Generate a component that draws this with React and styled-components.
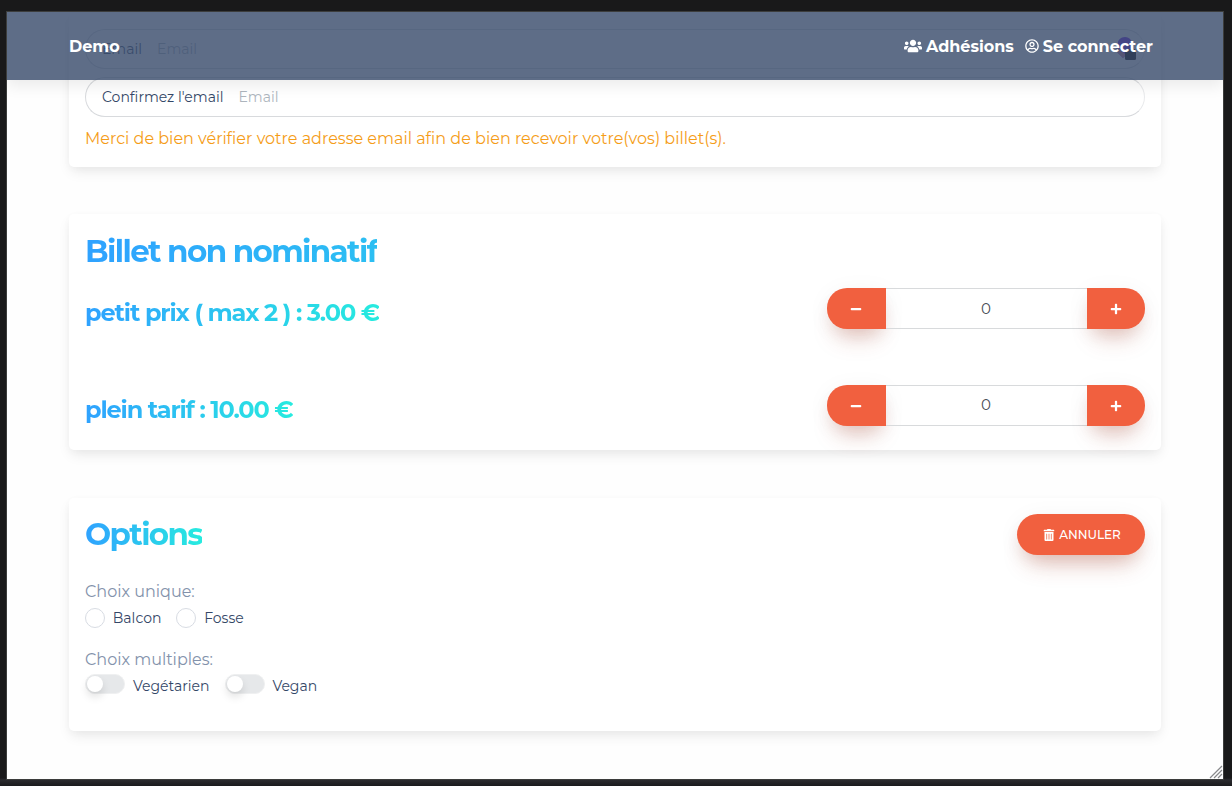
import React, { useState } from "react";
import styled, { createGlobalStyle, css } from "styled-components";
import { FaUsers, FaRegUserCircle, FaMinus, FaPlus, FaTrashAlt } from "react-icons/fa";

const Global = createGlobalStyle`
  * { box-sizing: border-box; }
  html, body { margin: 0; background: #19191a; }
  body { font-family: Montserrat, Inter, "Noto Sans", sans-serif; font-weight: 400; color: #344767; overflow: hidden; }
  button, input { font: inherit; }
`;

const Frame = styled.div`
  height: 786px;
  padding: 11px 8px 6px 6px;
  background: linear-gradient(#19191a 0 778px, #2b2b2f 780px, #1a1a1d 786px);
`;
const Viewport = styled.div`
  position: relative;
  height: 769px;
  overflow: hidden;
  background: #fefefe;
  border: 1px solid #3c3d3c;
`;
const Navbar = styled.header`
  position: absolute;
  inset: 0 0 auto;
  z-index: 3;
  height: 68px;
  padding: 0 70px 0 62px;
  display: flex;
  align-items: center;
  justify-content: space-between;
  background: rgba(58, 77, 108, 0.82);
  box-shadow: 0 6px 14px rgba(0, 0, 0, 0.08);
  color: #fff;
  font-size: 16px;
  font-weight: 700;
`;
const Links = styled.nav`
  display: flex;
  gap: 11.5px;
`;
const NavLink = styled.a`
  display: flex;
  align-items: center;
  gap: 3.5px;
  svg { display: block; }
`;
const Label = styled.span`
  display: block;
  white-space: nowrap;
`;

const Content = styled.main`
  padding: 0 62px;
  display: flex;
  flex-direction: column;
`;
const Card = styled.section`
  height: ${(p) => p.$height}px;
  margin-bottom: ${(p) => p.$after || 0}px;
  padding: ${(p) => (p.$cut ? 17 : 16)}px 16px 16px;
  border-radius: ${(p) => (p.$cut ? "0 0 5px 5px" : "5px")};
  background: #fff;
  box-shadow: 0 6px 14px -2px rgba(0, 0, 0, 0.09), 0 2px 8px rgba(0, 0, 0, 0.025);
`;
const Field = styled.label`
  height: 40px;
  margin-bottom: 8px;
  padding: 0 16px;
  display: flex;
  align-items: center;
  border: 1px solid #d8dadd;
  border-right-color: #e9eaec;
  border-radius: 20px;
  font-size: 14px;
  svg { margin-left: auto; margin-right: -12px; }
`;
const Placeholder = styled(Label)`
  margin-left: 15px;
  color: #adb5bd;
`;
const Notice = styled.p`
  margin: 11px 0 0;
  color: #f59d18;
  font-size: 16px;
  line-height: 22px;
`;
const gradient = css`
  width: max-content;
  background: linear-gradient(90deg, #2fa2ff, #27ebdf) 0 0 / ${(p) => p.$span || "100%"} 100%;
  background-clip: text;
  -webkit-background-clip: text;
  color: transparent;
`;
const Title = styled.h2`
  margin: 0;
  font-size: 31px;
  font-weight: 700;
  line-height: ${(p) => p.$line || 42}px;
  white-space: nowrap;
  letter-spacing: -1.63px;
  ${gradient}
`;
const Price = styled.h4`
  margin: 0;
  font-size: 24px;
  font-weight: 700;
  line-height: 34px;
  white-space: nowrap;
  letter-spacing: -1.12px;
  ${gradient}
`;
const PriceRow = styled.div`
  height: 41px;
  margin-top: ${(p) => p.$top}px;
  display: flex;
  justify-content: space-between;
  align-items: center;
`;
const PriceCell = styled.div`
  padding-top: 9px;
`;
const Stepper = styled.div`
  width: 318px;
  height: 41px;
  display: flex;
`;
const StepButton = styled.button`
  width: ${(p) => (p.$left ? 59 : 58)}px;
  border: 0;
  padding: 0 1px 0 0;
  display: flex;
  align-items: center;
  justify-content: center;
  color: #fff;
  background: #f1603f;
  border-radius: ${(p) => (p.$left ? "20px 0 0 20px" : "0 20px 20px 0")};
  box-shadow: 0 16px 26px -10px rgba(165, 45, 20, 0.28), 0 4px 25px rgba(0, 0, 0, 0.05), 0 8px 16px -5px rgba(165, 45, 20, 0.12);
`;
const Count = styled.input`
  flex: 1;
  min-width: 0;
  padding: 0 1px ${(p) => p.$lift || 0}px 0;
  text-align: center;
  font-size: 15px;
  color: #495057;
  background: transparent;
  border: solid #d8dadc;
  border-width: 1px 0;
  border-radius: 0;
`;
const CardHead = styled.div`
  display: flex;
  justify-content: space-between;
  align-items: flex-start;
`;
const Cancel = styled.button`
  width: 128px;
  height: 41px;
  padding: 0 0 0 2px;
  border: 0;
  border-radius: 21px;
  display: flex;
  align-items: center;
  justify-content: center;
  gap: 4px;
  color: #fff;
  background: #f1603f;
  font-size: 12px;
  font-weight: 500;
  box-shadow: 0 16px 26px -10px rgba(165, 45, 20, 0.3), 0 4px 25px rgba(0, 0, 0, 0.05), 0 8px 16px -5px rgba(165, 45, 20, 0.14);
`;
const GroupTitle = styled.p`
  margin: ${(p) => p.$top}px 0 0;
  color: #8392ab;
  font-size: 16px;
  line-height: 24px;
`;
const Choices = styled.div`
  height: 28px;
  display: flex;
  align-items: center;
  gap: ${(p) => p.$gap}px;
`;
const Choice = styled.label`
  display: flex;
  align-items: center;
  gap: ${(p) => p.$gap || 8}px;
  font-size: 14px;
`;
const Radio = styled.span`
  width: 20px;
  height: 20px;
  border: 1px solid #d8dce3;
  border-radius: 50%;
`;
const Switch = styled.span`
  width: 40px;
  height: 20px;
  margin-top: -4px;
  padding: 1px;
  border: 1px solid #eff0f1;
  border-radius: 10px;
  background: #e6e8ea;
  &::before {
    content: "";
    display: block;
    width: 16px;
    height: 16px;
    border-radius: 50%;
    background: #fff;
    box-shadow: 0 5px 8px rgba(0, 0, 0, 0.12);
  }
`;
const Grip = styled.svg`
  position: absolute;
  right: 0;
  bottom: 0;
`;

function Quantity({ lift }) {
  const [n, setN] = useState(0);
  return (
    <Stepper>
      <StepButton $left aria-label="Moins" onClick={() => setN(Math.max(0, n - 1))}><FaMinus size={12} /></StepButton>
      <Count value={n} $lift={lift} readOnly />
      <StepButton aria-label="Plus" onClick={() => setN(n + 1)}><FaPlus size={12} /></StepButton>
    </Stepper>
  );
}

export default function App() {
  return (
    <Frame>
      <Global />
      <Viewport>
        <Navbar>
          <Label>Demo</Label>
          <Links>
            <NavLink><FaUsers size={18} /><Label>Adhésions</Label></NavLink>
            <NavLink><FaRegUserCircle size={14} /><Label>Se connecter</Label></NavLink>
          </Links>
        </Navbar>
        <Content>
          <Card $height={155} $after={47} $cut>
            <Field>
              <Label>Email</Label><Placeholder>Email</Placeholder>
              <svg width="24" height="26" viewBox="0 0 24 26">
                <path d="M9 1C4 1 1 5 2 9l-3 5 8 8 9-9c2-5-1-12-7-12Z" fill="#6a20f0" />
                <path d="m1 11-2 3 8 8 3-3Z" fill="#c87898" />
                <rect x="9" y="13" width="11" height="11" rx="1.5" fill="#000" />
              </svg>
            </Field>
            <Field><Label>Confirmez l'email</Label><Placeholder>Email</Placeholder></Field>
            <Notice><Label>Merci de bien vérifier votre adresse email afin de bien recevoir votre(vos) billet(s).</Label></Notice>
          </Card>
          <Card $height={236} $after={48}>
            <Title $span="742px">Billet non nominatif</Title>
            <PriceRow $top={16}>
              <PriceCell><Price>petit prix ( max 2 ) : 3.00 €</Price></PriceCell>
              <Quantity />
            </PriceRow>
            <PriceRow $top={56}>
              <PriceCell><Price>plein tarif : 10.00 €</Price></PriceCell>
              <Quantity lift={2} />
            </PriceRow>
          </Card>
          <Card $height={233}>
            <CardHead>
              <Title $line={40}>Options</Title>
              <Cancel><FaTrashAlt size={12} /><Label>ANNULER</Label></Cancel>
            </CardHead>
            <GroupTitle $top={25}><Label>Choix unique:</Label></GroupTitle>
            <Choices $gap={14.8}>
              <Choice $gap={7.8}><Radio /><Label>Balcon</Label></Choice>
              <Choice $gap={8}><Radio /><Label>Fosse</Label></Choice>
            </Choices>
            <GroupTitle $top={16}><Label>Choix multiples:</Label></GroupTitle>
            <Choices $gap={15.5}>
              <Choice><Switch /><Label>Vegétarien</Label></Choice>
              <Choice $gap={7.5}><Switch /><Label>Vegan</Label></Choice>
            </Choices>
          </Card>
        </Content>
        <Grip width="14" height="14" viewBox="0 0 14 14" fill="none" stroke="#88898b" strokeWidth="1.2">
          <path d="M1 13 13 1M5 13l8-8M9 13l4-4" />
        </Grip>
      </Viewport>
    </Frame>
  );
}
